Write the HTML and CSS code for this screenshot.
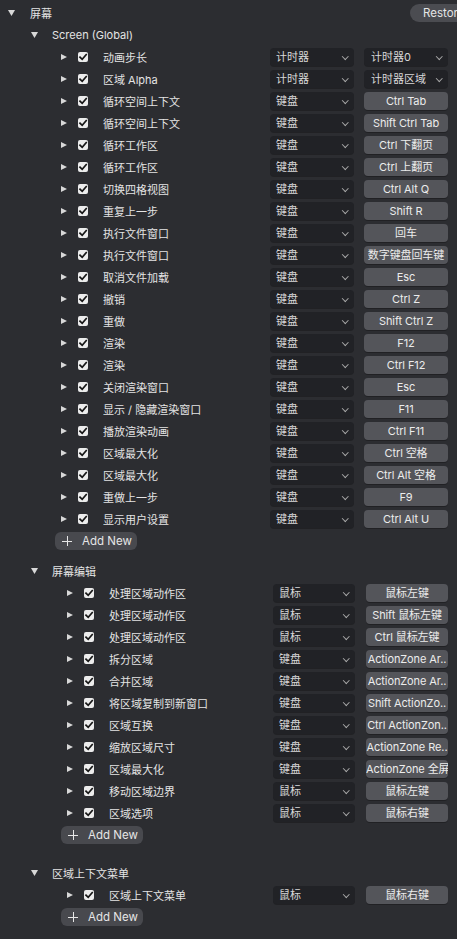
FILE: index.html
```html
<!DOCTYPE html>
<html lang="zh">
<head>
<meta charset="utf-8">
<link rel="stylesheet" href="styles.css">
</head>
<body>
<div class="page">
  <div class="row top">
    <svg class="tri-down" width="7" height="6" viewBox="0 0 7 6"><polygon points="0,0 7,0 3.5,6"/></svg>
    <span class="title">屏幕</span>
    <span class="restore">Restore</span>
  </div>

  <section class="sec s1">
    <div class="row head">
      <svg class="tri-down" width="7" height="6" viewBox="0 0 7 6"><polygon points="0,0 7,0 3.5,6"/></svg>
      <span class="title">Screen (Global)</span>
    </div>
    <div class="row item"><span class="tri"></span><span class="cb"></span><span class="lbl">动画步长</span><span class="dd">计时器</span><span class="dd dd2">计时器0</span></div>
    <div class="row item"><span class="tri"></span><span class="cb"></span><span class="lbl">区域 Alpha</span><span class="dd">计时器</span><span class="dd dd2">计时器区域</span></div>
    <div class="row item"><span class="tri"></span><span class="cb"></span><span class="lbl">循环空间上下文</span><span class="dd">键盘</span><span class="key">Ctrl Tab</span></div>
    <div class="row item"><span class="tri"></span><span class="cb"></span><span class="lbl">循环空间上下文</span><span class="dd">键盘</span><span class="key">Shift Ctrl Tab</span></div>
    <div class="row item"><span class="tri"></span><span class="cb"></span><span class="lbl">循环工作区</span><span class="dd">键盘</span><span class="key">Ctrl 下翻页</span></div>
    <div class="row item"><span class="tri"></span><span class="cb"></span><span class="lbl">循环工作区</span><span class="dd">键盘</span><span class="key">Ctrl 上翻页</span></div>
    <div class="row item"><span class="tri"></span><span class="cb"></span><span class="lbl">切换四格视图</span><span class="dd">键盘</span><span class="key">Ctrl Alt Q</span></div>
    <div class="row item"><span class="tri"></span><span class="cb"></span><span class="lbl">重复上一步</span><span class="dd">键盘</span><span class="key">Shift R</span></div>
    <div class="row item"><span class="tri"></span><span class="cb"></span><span class="lbl">执行文件窗口</span><span class="dd">键盘</span><span class="key">回车</span></div>
    <div class="row item"><span class="tri"></span><span class="cb"></span><span class="lbl">执行文件窗口</span><span class="dd">键盘</span><span class="key">数字键盘回车键</span></div>
    <div class="row item"><span class="tri"></span><span class="cb"></span><span class="lbl">取消文件加载</span><span class="dd">键盘</span><span class="key">Esc</span></div>
    <div class="row item"><span class="tri"></span><span class="cb"></span><span class="lbl">撤销</span><span class="dd">键盘</span><span class="key">Ctrl Z</span></div>
    <div class="row item"><span class="tri"></span><span class="cb"></span><span class="lbl">重做</span><span class="dd">键盘</span><span class="key">Shift Ctrl Z</span></div>
    <div class="row item"><span class="tri"></span><span class="cb"></span><span class="lbl">渲染</span><span class="dd">键盘</span><span class="key">F12</span></div>
    <div class="row item"><span class="tri"></span><span class="cb"></span><span class="lbl">渲染</span><span class="dd">键盘</span><span class="key">Ctrl F12</span></div>
    <div class="row item"><span class="tri"></span><span class="cb"></span><span class="lbl">关闭渲染窗口</span><span class="dd">键盘</span><span class="key">Esc</span></div>
    <div class="row item"><span class="tri"></span><span class="cb"></span><span class="lbl">显示 / 隐藏渲染窗口</span><span class="dd">键盘</span><span class="key">F11</span></div>
    <div class="row item"><span class="tri"></span><span class="cb"></span><span class="lbl">播放渲染动画</span><span class="dd">键盘</span><span class="key">Ctrl F11</span></div>
    <div class="row item"><span class="tri"></span><span class="cb"></span><span class="lbl">区域最大化</span><span class="dd">键盘</span><span class="key">Ctrl 空格</span></div>
    <div class="row item"><span class="tri"></span><span class="cb"></span><span class="lbl">区域最大化</span><span class="dd">键盘</span><span class="key">Ctrl Alt 空格</span></div>
    <div class="row item"><span class="tri"></span><span class="cb"></span><span class="lbl">重做上一步</span><span class="dd">键盘</span><span class="key">F9</span></div>
    <div class="row item"><span class="tri"></span><span class="cb"></span><span class="lbl">显示用户设置</span><span class="dd">键盘</span><span class="key">Ctrl Alt U</span></div>
    <div class="row addrow"><span class="add"><span class="plus"></span>Add New</span></div>
  </section>

  <section class="sec s2">
    <div class="row head">
      <svg class="tri-down" width="7" height="6" viewBox="0 0 7 6"><polygon points="0,0 7,0 3.5,6"/></svg>
      <span class="title">屏幕编辑</span>
    </div>
    <div class="row item"><span class="tri"></span><span class="cb"></span><span class="lbl">处理区域动作区</span><span class="dd">鼠标</span><span class="key">鼠标左键</span></div>
    <div class="row item"><span class="tri"></span><span class="cb"></span><span class="lbl">处理区域动作区</span><span class="dd">鼠标</span><span class="key">Shift 鼠标左键</span></div>
    <div class="row item"><span class="tri"></span><span class="cb"></span><span class="lbl">处理区域动作区</span><span class="dd">鼠标</span><span class="key">Ctrl 鼠标左键</span></div>
    <div class="row item"><span class="tri"></span><span class="cb"></span><span class="lbl">拆分区域</span><span class="dd">键盘</span><span class="key">ActionZone Ar..</span></div>
    <div class="row item"><span class="tri"></span><span class="cb"></span><span class="lbl">合并区域</span><span class="dd">键盘</span><span class="key">ActionZone Ar..</span></div>
    <div class="row item"><span class="tri"></span><span class="cb"></span><span class="lbl">将区域复制到新窗口</span><span class="dd">键盘</span><span class="key">Shift ActionZo..</span></div>
    <div class="row item"><span class="tri"></span><span class="cb"></span><span class="lbl">区域互换</span><span class="dd">键盘</span><span class="key">Ctrl ActionZon..</span></div>
    <div class="row item"><span class="tri"></span><span class="cb"></span><span class="lbl">缩放区域尺寸</span><span class="dd">键盘</span><span class="key">ActionZone Re..</span></div>
    <div class="row item"><span class="tri"></span><span class="cb"></span><span class="lbl">区域最大化</span><span class="dd">键盘</span><span class="key">ActionZone 全屏</span></div>
    <div class="row item"><span class="tri"></span><span class="cb"></span><span class="lbl">移动区域边界</span><span class="dd">鼠标</span><span class="key">鼠标左键</span></div>
    <div class="row item"><span class="tri"></span><span class="cb"></span><span class="lbl">区域选项</span><span class="dd">鼠标</span><span class="key">鼠标右键</span></div>
    <div class="row addrow"><span class="add"><span class="plus"></span>Add New</span></div>
  </section>

  <section class="sec s2 s3">
    <div class="row head">
      <svg class="tri-down" width="7" height="6" viewBox="0 0 7 6"><polygon points="0,0 7,0 3.5,6"/></svg>
      <span class="title">区域上下文菜单</span>
    </div>
    <div class="row item"><span class="tri"></span><span class="cb"></span><span class="lbl">区域上下文菜单</span><span class="dd">鼠标</span><span class="key">鼠标右键</span></div>
    <div class="row addrow"><span class="add"><span class="plus"></span>Add New</span></div>
  </section>
</div>
</body>
</html>
```
FILE: styles.css
```css
* { box-sizing: border-box; }
html, body {
  margin: 0;
  padding: 0;
  background: #2c2d31;
  overflow: hidden;
}
body {
  width: 457px;
  height: 939px;
  font-family: Inter, "Noto Sans CJK SC", sans-serif;
  font-size: 11px;
  color: #e4e4e4;
}
.page {
  padding-top: 2px;
  display: flex;
  flex-direction: column;
}
.row {
  height: 22px;
  display: flex;
  align-items: center;
  white-space: nowrap;
}
.tri-down { fill: #d8d8d8; flex-shrink: 0; }

.top { padding-left: 8px; }
.top .title { margin-left: 15px; }
.restore {
  margin-left: auto;
  margin-right: -30px;
  height: 18px;
  width: 77px;
  flex-shrink: 0;
  border-radius: 9px 0 0 9px;
  background: #4b4c51;
  color: #e6e6e6;
  padding-left: 13px;
  line-height: 18px;
  font-size: 11.5px;
}
.head { padding-left: 31px; }
.head .title { margin-left: 14px; }

.sec { display: flex; flex-direction: column; }
.s1 { --pl: 61px; --dd: 84px; --gap: 10px; --addl: 55px; }
.s2 { --pl: 67px; --dd: 82px; --gap: 11px; --addl: 61px; margin-top: 8px; }
.s3 { margin-top: 16px; }

.item { padding-left: var(--pl); padding-right: 9px; }
.tri {
  width: 17px;
  height: 7px;
  flex-shrink: 0;
  position: relative;
}
.tri::before {
  content: "";
  position: absolute;
  left: 0;
  top: 0;
  border-left: 6px solid #d8d8d8;
  border-top: 3.5px solid transparent;
  border-bottom: 3.5px solid transparent;
}
.cb {
  width: 10px;
  height: 10px;
  margin-right: 15px;
  flex-shrink: 0;
  border-radius: 2px;
  background: #ececec url("data:image/svg+xml;utf8,<svg xmlns='http://www.w3.org/2000/svg' width='10' height='10' viewBox='0 0 10 10'><path d='M2 5.2 L4.2 7.3 L8.2 2.6' fill='none' stroke='%23161616' stroke-width='1.7' stroke-linecap='square'/></svg>") no-repeat center;
}
.lbl {
  flex: 1;
  min-width: 0;
  overflow: hidden;
}
.dd {
  width: var(--dd);
  height: 18px;
  flex-shrink: 0;
  border-radius: 4px;
  background: #212226;
  box-shadow: 0 1px 0 rgba(0,0,0,0.25);
  color: #d8d8d8;
  padding-left: 6px;
  line-height: 18px;
  position: relative;
}
.dd::after {
  content: "";
  position: absolute;
  right: 7px;
  top: 6px;
  width: 3.5px;
  height: 3.5px;
  border-right: 1.3px solid #a8a8a8;
  border-bottom: 1.3px solid #a8a8a8;
  transform: rotate(45deg);
}
.dd2 { margin-left: var(--gap); padding-left: 7px; }
.key {
  margin-left: var(--gap);
  width: var(--dd);
  height: 18px;
  flex-shrink: 0;
  border-radius: 4px;
  background: #54555a;
  box-shadow: 0 1px 0 rgba(0,0,0,0.25);
  color: #ececec;
  text-align: center;
  line-height: 18px;
  overflow: hidden;
  letter-spacing: -0.1px;
}
.addrow { padding-left: var(--addl); }
.add {
  width: 82px;
  height: 18px;
  border-radius: 6px;
  background: #48494e;
  color: #e6e6e6;
  display: flex;
  align-items: center;
  padding-left: 7px;
  font-size: 11.5px;
}
.plus {
  width: 10px;
  height: 10px;
  margin-right: 10px;
  position: relative;
  flex-shrink: 0;
}
.plus::before, .plus::after {
  content: "";
  position: absolute;
  background: #e6e6e6;
}
.plus::before { left: 0; top: 4.5px; width: 10px; height: 1.2px; }
.plus::after { left: 4.5px; top: 0; width: 1.2px; height: 10px; }
```
